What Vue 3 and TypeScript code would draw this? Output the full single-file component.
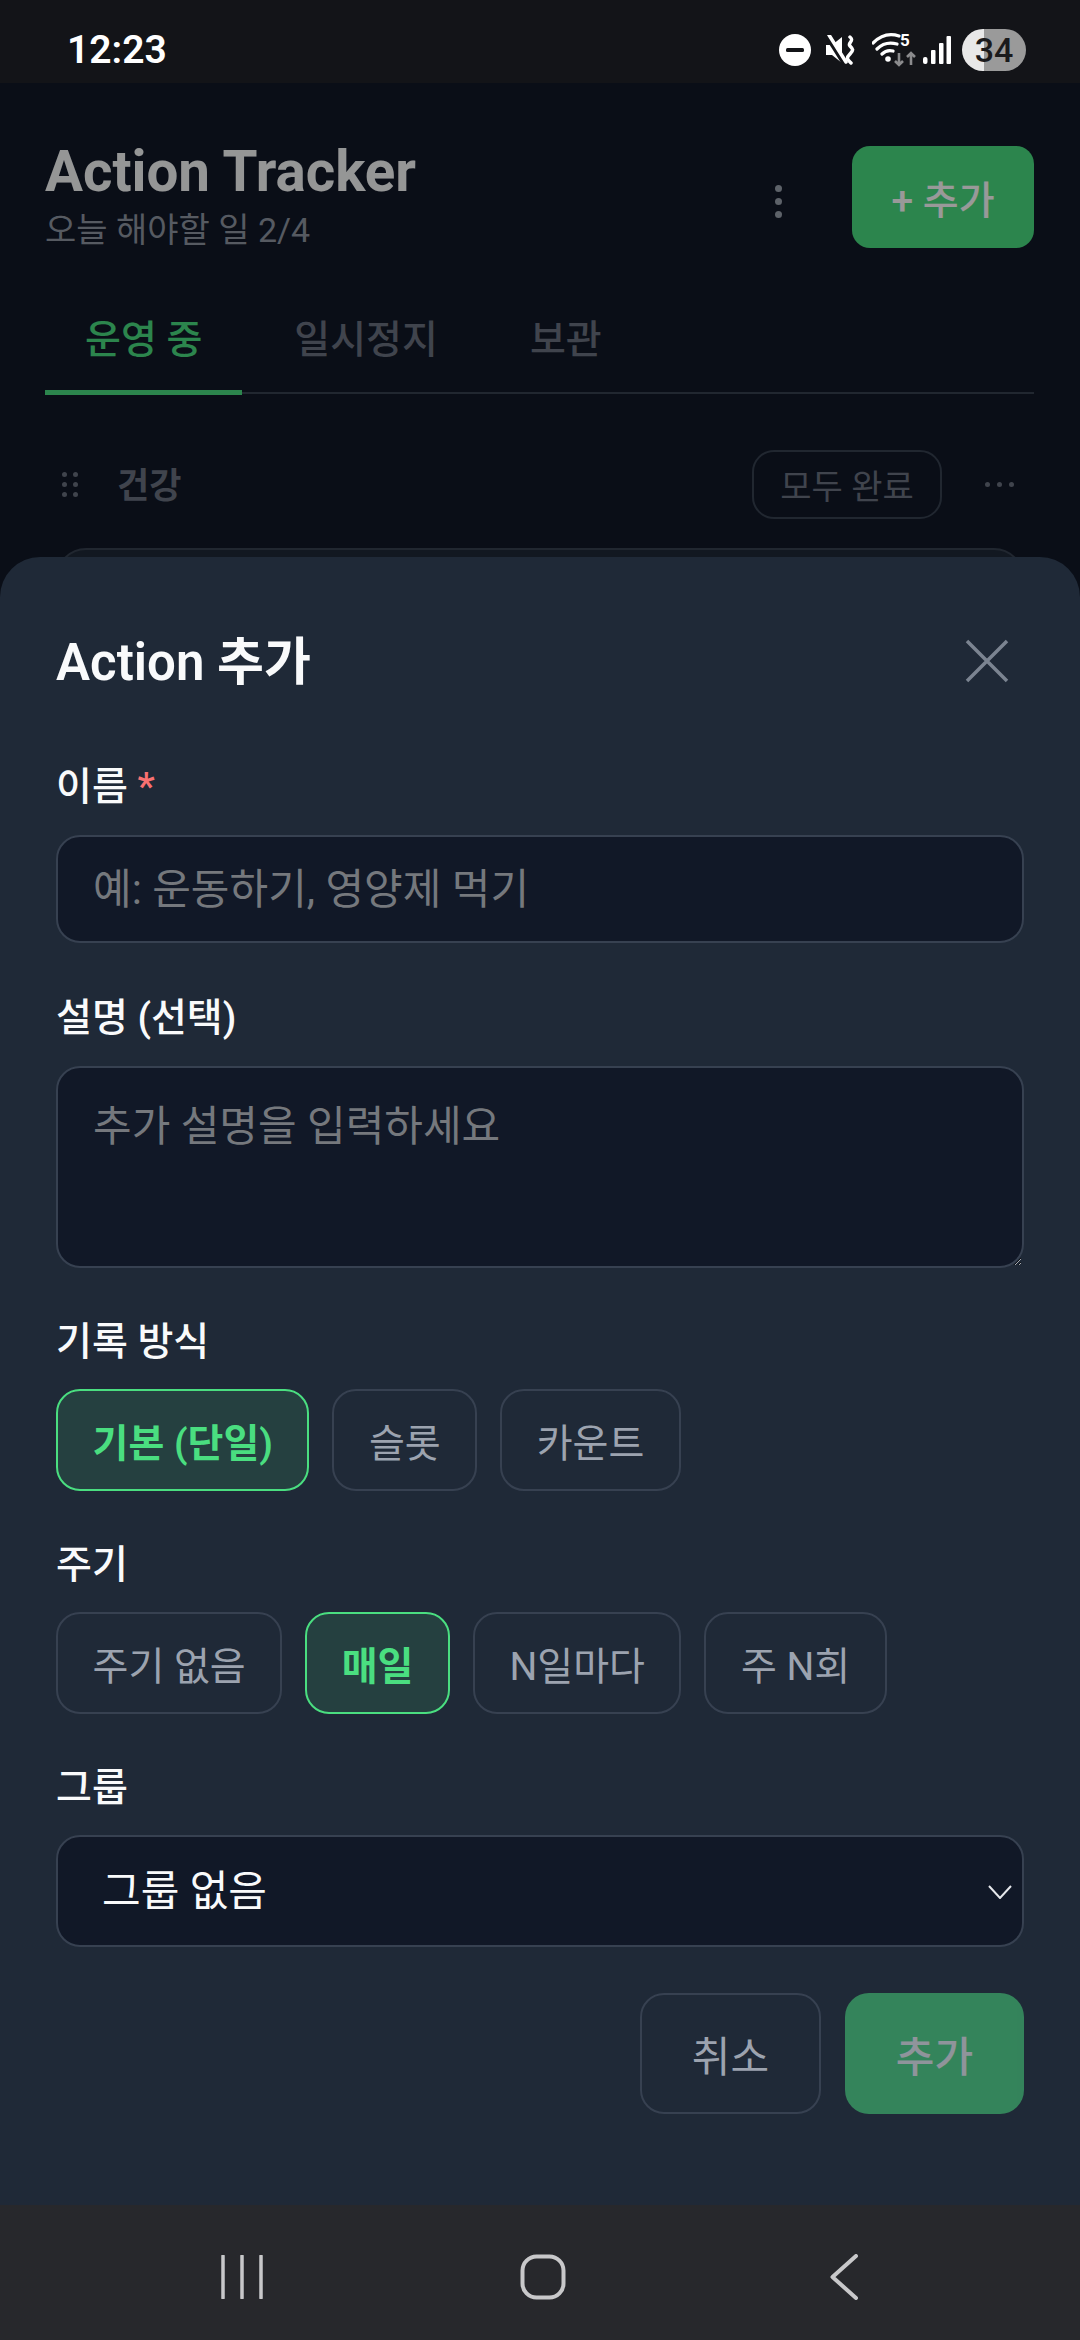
<script setup lang="ts">
import { ref } from 'vue';

const tabs = ['운영 중', '일시정지', '보관'];
const recordTypes = ['기본 (단일)', '슬롯', '카운트'];
const cycles = ['주기 없음', '매일', 'N일마다', '주 N회'];

const activeRecord = ref('기본 (단일)');
const activeCycle = ref('매일');
const name = ref('');
const description = ref('');
</script>

<template>
    <div class="screen">
        <div class="status-bar">
            <span class="clock">12:23</span>
            <div class="status-icons">
                <svg class="icon-dnd" width="32" height="32" viewBox="0 0 32 32">
                    <circle cx="16" cy="16" r="16" fill="#fff" />
                    <rect x="7" y="14" width="18" height="4" rx="1.5" fill="#131418" />
                </svg>
                <svg class="icon-mute" width="30" height="30" viewBox="0 0 30 30">
                    <path d="M0 10h6l10-8v26L6 20H0z" fill="#fff" />
                    <path d="M1 1l17 27" stroke="#131418" stroke-width="5" />
                    <path d="M3 0l17 27" stroke="#fff" stroke-width="3.5" stroke-linecap="round" />
                    <path d="M24 2c5 4-3 6 0 9s4 4 0 8-3 5 1 9" fill="none" stroke="#fff" stroke-width="3.5" stroke-linecap="round" />
                </svg>
                <svg class="icon-wifi" width="44" height="40" viewBox="0 -4 44 40">
                    <path d="M1 11C9 3 18 1 27 4M5 17c6-6 13-7 20-5M10 22c3-3 7-4 11-3" fill="none" stroke="#fff" stroke-width="3.2" stroke-linecap="round" />
                    <circle cx="16" cy="27" r="2.8" fill="#fff" />
                    <text x="28" y="14" class="wifi-five">5</text>
                    <path d="M27 21v12M23 29l4 4 4-4M39 33V21M35 25l4-4 4 4" fill="none" stroke="#8b8b8d" stroke-width="2.6" />
                </svg>
                <svg class="icon-signal" width="28" height="28" viewBox="0 0 28 28">
                    <rect x="0" y="21" width="4.5" height="7" rx="2" fill="#fff" />
                    <rect x="8" y="14" width="4.5" height="14" rx="1" fill="#fff" />
                    <rect x="16" y="7" width="4.5" height="21" rx="1" fill="#fff" />
                    <rect x="23.5" y="0" width="4.5" height="28" rx="1" fill="#fff" />
                </svg>
                <div class="battery"><span>34</span></div>
            </div>
        </div>

        <div class="body">
            <main class="page">
                <header class="page-header">
                    <div class="heading">
                        <h1 class="app-title">Action Tracker</h1>
                        <p class="app-sub">오늘 해야할 일 2/4</p>
                    </div>
                    <div class="kebab"><i /><i /><i /></div>
                    <button class="add-top" type="button">+ 추가</button>
                </header>

                <nav class="tabs">
                    <button v-for="(tab, i) in tabs" :key="tab" type="button" class="tab" :class="{ active: i === 0 }">
                        {{ tab }}
                    </button>
                </nav>

                <section class="group-row">
                    <div class="handle"><i v-for="n in 6" :key="n" /></div>
                    <span class="group-name">건강</span>
                    <button class="complete-all" type="button">모두 완료</button>
                    <span class="group-more"><i /><i /><i /></span>
                </section>

                <div class="action-card" />
            </main>

            <div class="overlay" />

            <form class="sheet" @submit.prevent>
                <div class="sheet-head">
                    <h2 class="sheet-title">Action 추가</h2>
                    <svg class="close" width="44" height="44" viewBox="0 0 44 44">
                        <path d="M2 2l40 40M42 2L2 42" stroke="#7b8491" stroke-width="3.5" fill="none" />
                    </svg>
                </div>

                <div class="field field-text field-name">
                    <label class="label">이름 <span class="req">*</span></label>
                    <input v-model="name" class="control input" type="text" placeholder="예: 운동하기, 영양제 먹기" />
                </div>

                <div class="field field-text">
                    <label class="label">설명 (선택)</label>
                    <textarea v-model="description" class="control textarea" placeholder="추가 설명을 입력하세요" />
                </div>

                <div class="field">
                    <label class="label">기록 방식</label>
                    <div class="chips">
                        <button
                            v-for="item in recordTypes"
                            :key="item"
                            type="button"
                            class="chip"
                            :class="{ active: item === activeRecord }"
                            @click="activeRecord = item"
                        >
                            {{ item }}
                        </button>
                    </div>
                </div>

                <div class="field">
                    <label class="label">주기</label>
                    <div class="chips">
                        <button
                            v-for="item in cycles"
                            :key="item"
                            type="button"
                            class="chip"
                            :class="{ active: item === activeCycle }"
                            @click="activeCycle = item"
                        >
                            {{ item }}
                        </button>
                    </div>
                </div>

                <div class="field">
                    <label class="label">그룹</label>
                    <div class="select-wrap">
                        <select class="control select">
                            <option>그룹 없음</option>
                        </select>
                        <svg class="chevron" width="24" height="14" viewBox="0 0 24 14">
                            <path d="M1 1l11 12L23 1" stroke="#e5e7eb" stroke-width="2" fill="none" />
                        </svg>
                    </div>
                </div>

                <div class="actions">
                    <button class="btn-cancel" type="button">취소</button>
                    <button class="btn-add" type="submit">추가</button>
                </div>
            </form>
        </div>

        <div class="nav-bar">
            <svg width="44" height="44" viewBox="0 0 44 44">
                <path d="M3 1v42M22 1v42M41 1v42" stroke="#c8c8ca" stroke-width="3.5" stroke-linecap="round" />
            </svg>
            <svg width="46" height="46" viewBox="0 0 46 46">
                <rect x="2.5" y="2.5" width="41" height="41" rx="14" stroke="#c8c8ca" stroke-width="4" fill="none" />
            </svg>
            <svg width="30" height="46" viewBox="0 0 30 46">
                <path d="M27 2L3.5 23 27 44" stroke="#c8c8ca" stroke-width="4" fill="none" stroke-linecap="round" stroke-linejoin="round" />
            </svg>
        </div>
    </div>
</template>

<style>
html,
body {
    margin: 0;
    background: #0a0e17;
}
</style>

<style scoped>
.screen {
    width: 1080px;
    height: 2340px;
    display: flex;
    flex-direction: column;
    overflow: hidden;
    font-family: Roboto, "Noto Sans CJK KR", sans-serif;
    color: #f9fafb;
}

button,
input,
textarea,
select {
    font-family: inherit;
}

.status-bar {
    height: 83px;
    flex: none;
    display: flex;
    align-items: center;
    justify-content: space-between;
    padding: 17px 54px 0 67px;
    box-sizing: border-box;
    background: #131418;
}

.clock {
    font-size: 39px;
    font-weight: 600;
    color: #fff;
}

.status-icons {
    display: flex;
    align-items: center;
}

.icon-mute {
    margin-left: 15px;
}

.icon-wifi {
    margin: 0 0 4px 16px;
}

.wifi-five {
    font-size: 17px;
    font-weight: 700;
    fill: #fff;
}

.icon-signal {
    margin-left: 7px;
}

.battery {
    width: 64px;
    height: 42px;
    margin-left: 11px;
    border-radius: 21px;
    display: flex;
    align-items: center;
    justify-content: center;
    background: linear-gradient(90deg, #e8e8e8 0 22px, #9a9a9a 22px);
    color: #1a1a1c;
    font-size: 34px;
    font-weight: 500;
}

.body {
    flex: 1;
    position: relative;
    overflow: hidden;
    background: #111827;
}

.page {
    padding: 58px 46px 0 45px;
}

.page-header {
    display: flex;
    align-items: flex-start;
}

.heading {
    flex: 1;
}

.app-title {
    margin: 0;
    font-size: 56.5px;
    line-height: 62px;
    font-weight: 700;
}

.app-sub {
    margin: 5px 0 0;
    font-size: 34px;
    line-height: 44px;
    color: #8f96a2;
}

.kebab {
    display: flex;
    flex-direction: column;
    gap: 6px;
    margin: 44px 70px 0 0;
}

.kebab i {
    width: 7px;
    height: 7px;
    border-radius: 50%;
    background: #9ca3af;
}

.add-top {
    width: 182px;
    height: 102px;
    margin-top: 5px;
    border: 0;
    border-radius: 18px;
    background: #4ade80;
    color: #fff;
    font-size: 39px;
    font-weight: 500;
}

.tabs {
    display: flex;
    gap: 12px;
    margin-top: 38px;
    border-bottom: 2px solid #374151;
}

.tab {
    padding: 25px 40px;
    margin-bottom: -3px;
    border: 0;
    border-bottom: 5px solid transparent;
    background: none;
    color: #6b7280;
    font-size: 39px;
    line-height: 50px;
    font-weight: 500;
}

.tab.active {
    color: #4ade80;
    border-bottom-color: #4ade80;
}

.group-row {
    display: flex;
    align-items: center;
    margin-top: 56px;
    padding-left: 17px;
}

.handle {
    display: grid;
    grid-template-columns: 5px 5px;
    gap: 5px 6px;
    margin-right: 39px;
}

.handle i {
    height: 5px;
    border-radius: 50%;
    background: #6b7280;
}

.group-name {
    flex: 1;
    padding-bottom: 5px;
    font-size: 35px;
    font-weight: 700;
    color: #6b7280;
}

.complete-all {
    width: 190px;
    height: 69px;
    border: 2px solid #374151;
    border-radius: 22px;
    background: none;
    color: #6b7280;
    font-size: 34px;
}

.group-more {
    display: flex;
    gap: 7px;
    margin: 0 20px 0 43px;
}

.group-more i {
    width: 5px;
    height: 5px;
    border-radius: 50%;
    background: #6b7280;
}

.action-card {
    height: 100px;
    margin: 29px 10px 0 11px;
    border: 2px solid #374151;
    border-radius: 30px;
    background: #1f2937;
}

.overlay {
    position: absolute;
    inset: 0;
    background: rgba(0, 0, 0, 0.4);
}

.sheet {
    position: absolute;
    left: 0;
    right: 0;
    bottom: 0;
    height: 1648px;
    box-sizing: border-box;
    padding: 62px 56px 0;
    border-radius: 40px 40px 0 0;
    background: #1f2937;
}

.sheet-head {
    height: 84px;
    display: flex;
    align-items: center;
    justify-content: space-between;
    margin-bottom: 56px;
}

.sheet-title {
    margin: 0;
    padding-bottom: 6px;
    font-size: 51px;
    font-weight: 600;
}

.close {
    margin-right: 15px;
}

.field {
    margin-bottom: 46px;
}

.field-name {
    margin-bottom: 47px;
}

.label {
    display: block;
    height: 57px;
    margin-bottom: 18px;
    font-size: 39px;
    line-height: 57px;
    font-weight: 500;
}

.field-text .label {
    margin-bottom: 19px;
}

.req {
    color: #f87171;
}

.control {
    display: block;
    width: 100%;
    box-sizing: border-box;
    border: 2px solid #374151;
    border-radius: 24px;
    background: #111827;
    color: #f9fafb;
    font-size: 42px;
    outline: none;
}

.control::placeholder {
    color: #75787d;
}

.input {
    height: 108px;
    padding: 0 35px;
}

.textarea {
    height: 202px;
    padding: 30px 35px;
    line-height: 58px;
}

.select-wrap {
    position: relative;
    margin-top: 1px;
}

.select {
    height: 112px;
    padding: 0 44px;
    appearance: none;
}

.chevron {
    position: absolute;
    right: 12px;
    top: 50px;
}

.chips {
    display: flex;
    gap: 23px;
}

.chip {
    height: 102px;
    padding: 0 34.5px;
    border: 2px solid #374151;
    border-radius: 24px;
    background: none;
    color: #9ca3af;
    font-size: 39px;
}

.chip.active {
    border-color: #4ade80;
    background: rgba(74, 222, 128, 0.13);
    color: #4ade80;
    font-weight: 600;
}

.actions {
    display: flex;
    justify-content: flex-end;
    gap: 24px;
}

.btn-cancel,
.btn-add {
    width: 181px;
    height: 121px;
    border-radius: 24px;
    font-size: 42px;
}

.btn-cancel {
    border: 2px solid #374151;
    background: none;
    color: #9ca3af;
}

.btn-add {
    width: 179px;
    border: 0;
    background: #4ade80;
    color: #fff;
    font-weight: 500;
    opacity: 0.5;
}

.nav-bar {
    height: 135px;
    flex: none;
    box-sizing: border-box;
    padding: 8px 86px 0 92px;
    display: grid;
    grid-template-columns: repeat(3, 1fr);
    align-items: center;
    justify-items: center;
    background: #27282c;
}
</style>
